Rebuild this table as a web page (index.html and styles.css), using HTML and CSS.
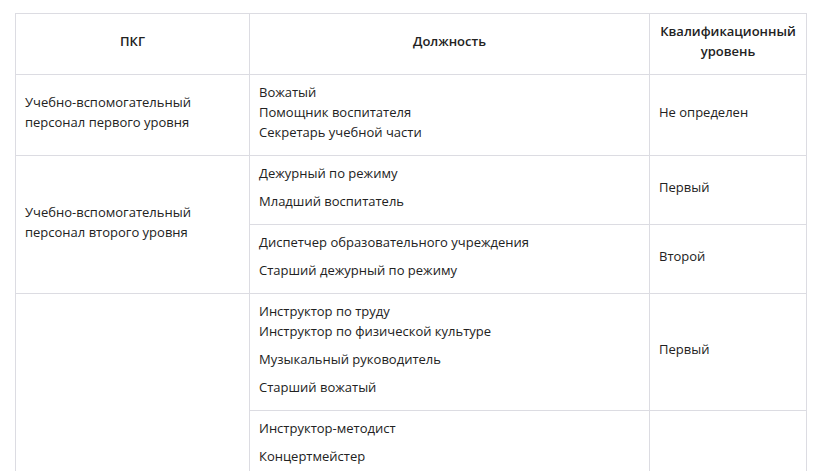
FILE: index.html
```html
<!DOCTYPE html>
<html lang="ru">
<head>
<meta charset="utf-8">
<title>ПКГ</title>
<link rel="stylesheet" href="styles.css">
</head>
<body>
<div class="page">
<table class="pkg">
  <colgroup>
    <col class="c1">
    <col class="c2">
    <col class="c3">
  </colgroup>
  <thead>
    <tr>
      <th><p>ПКГ</p></th>
      <th><p>Должность</p></th>
      <th><p>Квалификационный уровень</p></th>
    </tr>
  </thead>
  <tbody>
    <tr>
      <td><p>Учебно-вспомогательный персонал первого уровня</p></td>
      <td><p>Вожатый<br>Помощник воспитателя<br>Секретарь учебной части</p></td>
      <td><p>Не определен</p></td>
    </tr>
    <tr>
      <td rowspan="2"><p>Учебно-вспомогательный персонал второго уровня</p></td>
      <td><p>Дежурный по режиму</p><p>Младший воспитатель</p></td>
      <td><p>Первый</p></td>
    </tr>
    <tr>
      <td><p>Диспетчер образовательного учреждения</p><p>Старший дежурный по режиму</p></td>
      <td><p>Второй</p></td>
    </tr>
    <tr>
      <td rowspan="4"><p>Педагогические работники</p></td>
      <td><p>Инструктор по труду<br>Инструктор по физической культуре</p><p>Музыкальный руководитель</p><p>Старший вожатый</p></td>
      <td><p>Первый</p></td>
    </tr>
    <tr>
      <td><p>Инструктор-методист</p><p>Концертмейстер</p><p>Педагог дополнительного образования</p><p>Педагог-организатор</p><p>Социальный педагог</p><p>Тренер-преподаватель</p></td>
      <td><p>Второй</p></td>
    </tr>
    <tr>
      <td><p>Воспитатель</p><p>Мастер производственного обучения</p><p>Методист</p><p>Педагог-психолог</p><p>Старший инструктор-методист</p><p>Старший педагог дополнительного образования</p><p>Старший тренер-преподаватель</p></td>
      <td><p>Третий</p></td>
    </tr>
    <tr>
      <td><p>Преподаватель</p><p>Преподаватель-организатор основ безопасности жизнедеятельности</p><p>Руководитель физического воспитания</p><p>Старший методист</p><p>Тьютор</p><p>Учитель</p><p>Учитель-дефектолог</p><p>Учитель-логопед</p></td>
      <td><p>Четвертый</p></td>
    </tr>
  </tbody>
</table>
</div>
</body>
</html>
```
FILE: styles.css
```css
html, body {
  margin: 0;
  padding: 0;
  background: #fff;
  overflow: hidden;
}
.page {
  padding: 13px 11px 0 15px;
  font-family: "Open Sans", "Liberation Sans", sans-serif;
  font-size: 13px;
  color: #222;
}
.pkg {
  width: 791px;
  border-collapse: collapse;
  table-layout: fixed;
}
.c1 { width: 234px; }
.c2 { width: 400px; }
.c3 { width: 157px; }
.pkg th, .pkg td {
  border: 1px solid #dcdce2;
  padding: 7px 9px 5px;
  vertical-align: middle;
  text-align: left;
  line-height: 20px;
}
.pkg th {
  text-align: center;
  font-weight: 600;
}
.pkg p {
  margin: 0 0 8px;
}
```
